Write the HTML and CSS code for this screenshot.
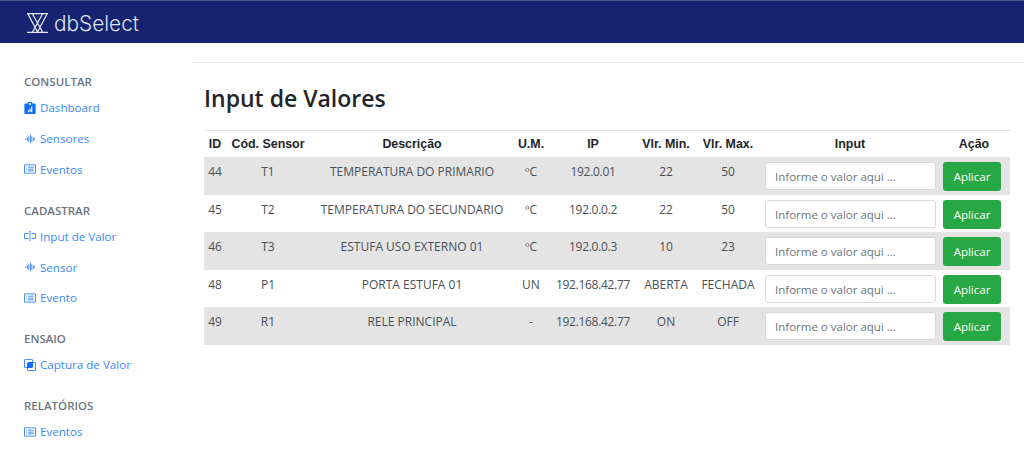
FILE: index.html
```html
<!DOCTYPE html>
<html lang="pt">
<head>
<meta charset="utf-8">
<title>dbSelect</title>
<link rel="stylesheet" href="styles.css">
</head>
<body>
<svg class="defs" width="0" height="0">
  <symbol id="i-wave" viewBox="0 0 16 16"><path d="M8.5 2a.5.5 0 0 1 .5.5v11a.5.5 0 0 1-1 0v-11a.5.5 0 0 1 .5-.5zm-2 2a.5.5 0 0 1 .5.5v7a.5.5 0 0 1-1 0v-7a.5.5 0 0 1 .5-.5zm4 0a.5.5 0 0 1 .5.5v7a.5.5 0 0 1-1 0v-7a.5.5 0 0 1 .5-.5zm-6 1.5A.5.5 0 0 1 5 6v4a.5.5 0 0 1-1 0V6a.5.5 0 0 1 .5-.5zm8 0a.5.5 0 0 1 .5.5v4a.5.5 0 0 1-1 0V6a.5.5 0 0 1 .5-.5zm-10 1A.5.5 0 0 1 3 7v2a.5.5 0 0 1-1 0V7a.5.5 0 0 1 .5-.5zm12 0a.5.5 0 0 1 .5.5v2a.5.5 0 0 1-1 0V7a.5.5 0 0 1 .5-.5z"/></symbol>
  <symbol id="i-list" viewBox="0 0 16 16"><path d="M14.5 3a.5.5 0 0 1 .5.5v9a.5.5 0 0 1-.5.5h-13a.5.5 0 0 1-.5-.5v-9a.5.5 0 0 1 .5-.5h13zm-13-1A1.5 1.5 0 0 0 0 3.5v9A1.5 1.5 0 0 0 1.5 14h13a1.5 1.5 0 0 0 1.5-1.5v-9A1.5 1.5 0 0 0 14.5 2h-13z"/><path d="M5 8a.5.5 0 0 1 .5-.5h7a.5.5 0 0 1 0 1h-7A.5.5 0 0 1 5 8zm0-2.5a.5.5 0 0 1 .5-.5h7a.5.5 0 0 1 0 1h-7a.5.5 0 0 1-.5-.5zm0 5a.5.5 0 0 1 .5-.5h7a.5.5 0 0 1 0 1h-7a.5.5 0 0 1-.5-.5zm-1-5a.5.5 0 1 1-1 0 .5.5 0 0 1 1 0zM4 8a.5.5 0 1 1-1 0 .5.5 0 0 1 1 0zm0 2.5a.5.5 0 1 1-1 0 .5.5 0 0 1 1 0z"/></symbol>
  <symbol id="i-input" viewBox="0 0 16 16"><path d="M10 5h4a1 1 0 0 1 1 1v4a1 1 0 0 1-1 1h-4v1h4a2 2 0 0 0 2-2V6a2 2 0 0 0-2-2h-4v1zM6 5V4H2a2 2 0 0 0-2 2v4a2 2 0 0 0 2 2h4v-1H2a1 1 0 0 1-1-1V6a1 1 0 0 1 1-1h4z"/><path d="M8 1a.5.5 0 0 1 .5.5v13a.5.5 0 0 1-1 0v-13A.5.5 0 0 1 8 1z"/></symbol>
  <symbol id="i-front" viewBox="0 0 16 16"><path d="M0 2a2 2 0 0 1 2-2h8a2 2 0 0 1 2 2v2h2a2 2 0 0 1 2 2v8a2 2 0 0 1-2 2H6a2 2 0 0 1-2-2v-2H2a2 2 0 0 1-2-2V2zm5 10v2a1 1 0 0 0 1 1h8a1 1 0 0 0 1-1V6a1 1 0 0 0-1-1h-2v5a2 2 0 0 1-2 2H5zm6-8V2a1 1 0 0 0-1-1H2a1 1 0 0 0-1 1v8a1 1 0 0 0 1 1h2V6a2 2 0 0 1 2-2h5z"/></symbol>
  <symbol id="i-clip" viewBox="0 0 16 16"><path fill-rule="evenodd" d="M6 0h4a1 1 0 0 1 1 1v1h3a1.500 1.500 0 0 1 1.500 1.500v11A1.500 1.500 0 0 1 14 16H2a1.500 1.500 0 0 1-1.500-1.500v-11A1.500 1.500 0 0 1 2 2h3V1a1 1 0 0 1 1-1zm.5 1.500v2h3v-2h-3zM5 10.500v3h1.500v-3H5zm2.300-2v5h1.500v-5H7.300zm2.300-2.500v7.500h1.500V6H9.600z"/></symbol>
</svg>

<header class="topbar">
  <svg class="logo" viewBox="0 0 21 20" fill="none" stroke="#e4e7f2" stroke-width="1.300">
    <path d="M0 .7h21M0 19.300h21M1 1l9.500 18M10.500 19L20 1M5.500 1l5 9 5-9M5.500 19l5-9 5 9"/>
  </svg>
  <span class="brand">dbSelect</span>
</header>

<div class="layout">
  <nav class="sidebar">
    <section class="group">
      <h6 class="group-title">CONSULTAR</h6>
      <a class="link" href="#"><svg class="icon"><use href="#i-clip"/></svg>Dashboard</a>
      <a class="link" href="#"><svg class="icon"><use href="#i-wave"/></svg>Sensores</a>
      <a class="link" href="#"><svg class="icon"><use href="#i-list"/></svg>Eventos</a>
    </section>
    <section class="group">
      <h6 class="group-title">CADASTRAR</h6>
      <a class="link" href="#"><svg class="icon"><use href="#i-input"/></svg>Input de Valor</a>
      <a class="link" href="#"><svg class="icon"><use href="#i-wave"/></svg>Sensor</a>
      <a class="link" href="#"><svg class="icon"><use href="#i-list"/></svg>Evento</a>
    </section>
    <section class="group">
      <h6 class="group-title">ENSAIO</h6>
      <a class="link" href="#"><svg class="icon"><use href="#i-front"/></svg>Captura de Valor</a>
    </section>
    <section class="group">
      <h6 class="group-title">RELATÓRIOS</h6>
      <a class="link" href="#"><svg class="icon"><use href="#i-list"/></svg>Eventos</a>
    </section>
  </nav>

  <main class="content">
    <h1 class="title">Input de Valores</h1>
    <table class="data">
      <colgroup>
        <col class="c-id"><col class="c-cod"><col class="c-desc"><col class="c-um"><col class="c-ip"><col class="c-min"><col class="c-max"><col class="c-input"><col class="c-act">
      </colgroup>
      <thead>
        <tr><th>ID</th><th>Cód. Sensor</th><th>Descrição</th><th>U.M.</th><th>IP</th><th>Vlr. Min.</th><th>Vlr. Max.</th><th>Input</th><th>Ação</th></tr>
      </thead>
      <tbody>
        <tr><td>44</td><td>T1</td><td>TEMPERATURA DO PRIMARIO</td><td>ºC</td><td class="ip">192.0.01</td><td>22</td><td>50</td><td class="cell-ctl"><input class="field" placeholder="Informe o valor aqui ..."></td><td class="cell-ctl"><button class="apply">Aplicar</button></td></tr>
        <tr><td>45</td><td>T2</td><td>TEMPERATURA DO SECUNDARIO</td><td>ºC</td><td class="ip">192.0.0.2</td><td>22</td><td>50</td><td class="cell-ctl"><input class="field" placeholder="Informe o valor aqui ..."></td><td class="cell-ctl"><button class="apply">Aplicar</button></td></tr>
        <tr><td>46</td><td>T3</td><td>ESTUFA USO EXTERNO 01</td><td>ºC</td><td class="ip">192.0.0.3</td><td>10</td><td>23</td><td class="cell-ctl"><input class="field" placeholder="Informe o valor aqui ..."></td><td class="cell-ctl"><button class="apply">Aplicar</button></td></tr>
        <tr><td>48</td><td>P1</td><td>PORTA ESTUFA 01</td><td>UN</td><td class="ip">192.168.42.77</td><td>ABERTA</td><td>FECHADA</td><td class="cell-ctl"><input class="field" placeholder="Informe o valor aqui ..."></td><td class="cell-ctl"><button class="apply">Aplicar</button></td></tr>
        <tr><td>49</td><td>R1</td><td>RELE PRINCIPAL</td><td>-</td><td class="ip">192.168.42.77</td><td>ON</td><td>OFF</td><td class="cell-ctl"><input class="field" placeholder="Informe o valor aqui ..."></td><td class="cell-ctl"><button class="apply">Aplicar</button></td></tr>
      </tbody>
    </table>
  </main>
</div>
</body>
</html>
```

FILE: styles.css
```css
* { box-sizing: border-box; }
html, body { margin: 0; height: 458px; overflow: hidden; }
body { background: #fff; font-family: "Open Sans", "Noto Sans", sans-serif; color: #212529; }
.defs { display: block; height: 0; }

.topbar {
  height: 43px;
  background: #152370;
  border-top: 1px solid #4a5590;
  display: flex;
  align-items: center;
  padding-left: 27px;
  gap: 6px;
}
.logo { width: 21px; height: 20px; margin-top: 1px; flex: none; }
.brand {
  font-family: Inter, "Liberation Sans", sans-serif;
  font-weight: 300;
  font-size: 20.800px;
  color: #dfe2ee;
  margin-top: 2px;
}

.layout { display: flex; }
.sidebar { width: 192px; padding: 30.400px 0 0 24px; flex: none; }
.group { margin-bottom: 17.250px; }
.group-title {
  margin: 0;
  font-size: 11.500px;
  line-height: 18px;
  font-weight: 600;
  color: #6c757d;
}
.link {
  display: flex;
  align-items: center;
  height: 30.750px;
  font-size: 11.600px;
  color: #3b88fd;
  text-decoration: none;
}
.group-title + .link { margin-top: 1px; }
.icon { width: 12px; height: 12px; fill: #0d6efd; margin-right: 4px; flex: none; }

.content {
  flex: 1;
  margin-top: 19px;
  border-top: 1px solid #e9e9ec;
  padding: 0 14px 0 12px;
}
.title {
  margin: 20px 0 17px;
  font-size: 23px;
  line-height: 30px;
  font-weight: 600;
  color: #212529;
}
.data {
  width: 806px;
  border-collapse: collapse;
  table-layout: fixed;
  font-size: 12px;
}
.c-id { width: 22px; }
.c-cod { width: 84px; }
.c-desc { width: 204px; }
.c-um { width: 34px; }
.c-ip { width: 90px; }
.c-min { width: 56px; }
.c-max { width: 68px; }
.c-input { width: 176px; }
.c-act { width: 72px; }
.data th {
  font-family: "Liberation Sans", Arial, sans-serif;
  font-size: 12.400px;
  font-weight: 700;
  height: 26px;
  padding: 0;
  border-top: 1px solid #dee2e6;
  text-align: center;
}
.data td {
  height: 37px;
  padding: 7px 0 0;
  text-align: center;
  vertical-align: top;
  color: #495057;
  line-height: 16px;
}
.data td.ip { letter-spacing: -0.300px; }
.data tbody tr:nth-child(odd) td { height: 38px; }
.data tbody tr:nth-child(odd) { background: #e4e4e4; }
.data td.cell-ctl { padding: 5px 0 0; text-align: left; }
.field {
  display: block;
  width: 171px;
  height: 28px;
  margin-left: 3px;
  padding: 1px 9px 0;
  border: 1px solid #d5d9de;
  border-radius: 3px;
  background: #fff;
  font: 11.500px "Open Sans", "Noto Sans", sans-serif;
  outline: none;
}
.field::placeholder { color: #6c757d; opacity: 1; }
.apply {
  display: block;
  width: 58px;
  height: 29px;
  margin: 0 0 0 5px;
  padding: 0;
  border: 0;
  border-radius: 3px;
  background: #28a745;
  color: #fff;
  font: 11.500px "Open Sans", "Noto Sans", sans-serif;
}
```
